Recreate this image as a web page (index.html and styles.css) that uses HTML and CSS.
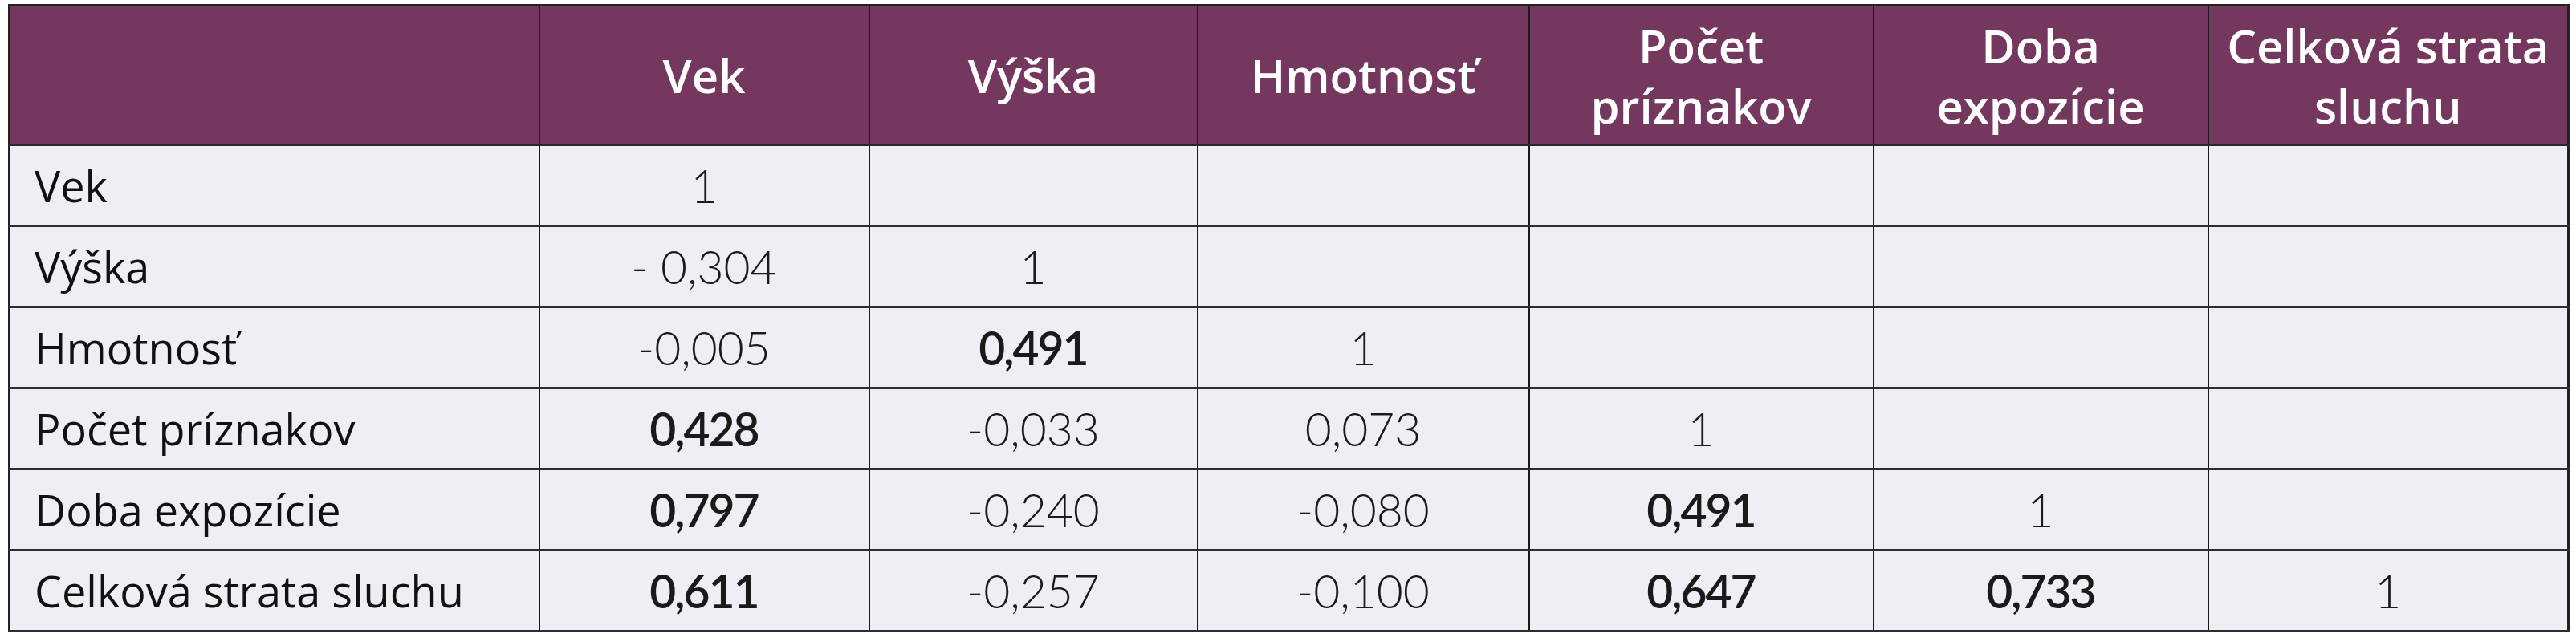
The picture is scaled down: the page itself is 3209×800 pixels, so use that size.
FILE: index.html
```html
<!DOCTYPE html>
<html lang="sk">
<head>
<meta charset="utf-8">
<title>Korelácie</title>
<link rel="stylesheet" href="styles.css">
</head>
<body>
<table class="corr">
  <colgroup>
    <col class="c-label">
    <col class="c1"><col class="c2"><col class="c3"><col class="c4"><col class="c5"><col class="c6">
  </colgroup>
  <thead>
    <tr>
      <th></th>
      <th>Vek</th>
      <th>Výška</th>
      <th>Hmotnosť</th>
      <th>Počet<br>príznakov</th>
      <th>Doba<br>expozície</th>
      <th>Celková strata<br>sluchu</th>
    </tr>
  </thead>
  <tbody>
    <tr><td class="lbl">Vek</td><td>1</td><td></td><td></td><td></td><td></td><td></td></tr>
    <tr><td class="lbl">Výška</td><td>- 0,304</td><td>1</td><td></td><td></td><td></td><td></td></tr>
    <tr><td class="lbl">Hmotnosť</td><td>-0,005</td><td class="b">0,491</td><td>1</td><td></td><td></td><td></td></tr>
    <tr><td class="lbl">Počet príznakov</td><td class="b">0,428</td><td>-0,033</td><td>0,073</td><td>1</td><td></td><td></td></tr>
    <tr><td class="lbl">Doba expozície</td><td class="b">0,797</td><td>-0,240</td><td>-0,080</td><td class="b">0,491</td><td>1</td><td></td></tr>
    <tr><td class="lbl">Celková strata sluchu</td><td class="b">0,611</td><td>-0,257</td><td>-0,100</td><td class="b">0,647</td><td class="b">0,733</td><td>1</td></tr>
  </tbody>
</table>
</body>
</html>
```

FILE: styles.css
```css
html, body {
  margin: 0;
  padding: 0;
  background: #ffffff;
}
body {
  padding: 5px 0 0 10px;
}
.corr {
  border-collapse: collapse;
  table-layout: fixed;
  width: 3188px;
  background: #efeef5;
  border: 3px solid #222222;
}
.c-label { width: 660px; }
.c1 { width: 411px; }
.c2 { width: 409px; }
.c3 { width: 413px; }
.c4 { width: 429px; }
.c5 { width: 417px; }
.c6 { width: 449px; }

.corr th {
  background: #74385f;
  color: #ffffff;
  font-family: "Open Sans", "Liberation Sans", sans-serif;
  font-weight: 600;
  font-stretch: 90%;
  font-size: 58px;
  line-height: 75px;
  height: 171px;
  padding: 0 10px;
  text-align: center;
  vertical-align: middle;
  border-left: 2px solid #1a1a1a;
  border-right: 2px solid #1a1a1a;
  border-bottom: 3px solid #2a2a2a;
}
.corr td {
  height: 98px;
  padding: 0;
  text-align: center;
  vertical-align: middle;
  font-family: "Lato", "Liberation Sans", sans-serif;
  font-weight: 300;
  font-size: 57px;
  color: #1a1a1a;
  border-left: 2px solid #1a1a1a;
  border-right: 2px solid #1a1a1a;
  border-top: 3px solid #2e2e2e;
  border-bottom: 3px solid #2e2e2e;
}
.corr td.b {
  font-weight: 600;
  letter-spacing: -2px;
}
.corr td.lbl {
  text-align: left;
  padding-left: 30px;
  font-family: "Open Sans", "Liberation Sans", sans-serif;
  font-weight: 500;
  font-stretch: 92%;
  font-size: 54px;
  color: #111111;
}
```
